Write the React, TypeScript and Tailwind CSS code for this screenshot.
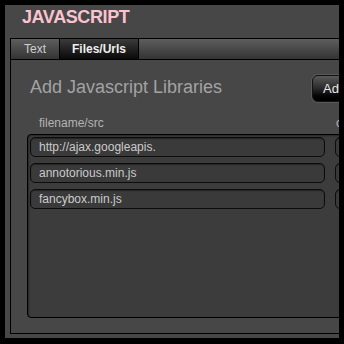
import React from 'react';

const files = ['http://ajax.googleapis.', 'annotorious.min.js', 'fancybox.min.js'];

const App: React.FC = () => {
  return (
    <div className="w-[344px] h-[344px] bg-black p-[5px] font-['Liberation_Sans',Arial,sans-serif]">
      <div className="w-[334px] h-[333px] bg-[#474747] overflow-hidden">
        {/* Title */}
        <div className="h-[33px] pl-[17px] pt-[1px]">
          <h1 className="text-[18px] leading-[22px] font-bold tracking-[-0.4px] text-[#f9c3cf]">
            JAVASCRIPT
          </h1>
        </div>

        {/* Tabbed box */}
        <div className="ml-[5px] w-[420px] h-[296px] border border-black">
          {/* Tab bar */}
          <div className="flex h-[21px] border-b border-black bg-gradient-to-b from-[#5e5e5e] to-[#343434]">
            <div className="w-[49px] border-r border-black flex items-center justify-center text-[12px] leading-[20px] text-[#cfcfcf]">
              Text
            </div>
            <div className="w-[79px] border-r border-black flex items-center justify-center text-[12px] leading-[20px] font-bold text-[#eeeeee] bg-gradient-to-b from-[#3c3c3c] to-[#0a0a0a]">
              Files/Urls
            </div>
          </div>

          {/* Content */}
          <div className="pl-[16px]">
            <div className="flex items-start mt-[15px] h-[27px]">
              <h2 className="w-[285px] pl-[3px] pt-[1px] text-[18px] leading-[22px] text-[#a3a3a3]">
                Add Javascript Libraries
              </h2>
              <button className="w-[80px] h-[27px] rounded-[6px] border border-[#111] bg-gradient-to-b from-[#5a5a5a] via-[#2a2a2a] to-[#000] text-left pl-[10px] text-[13px] text-[#e4e8f0] shadow-[0_0_0_1px_rgba(110,110,110,0.5)]">
                Add
              </button>
            </div>

            {/* Column headers */}
            <div className="flex mt-[14px] mb-[4px] text-[12px] leading-[14px] text-[#b4b4b4]">
              <span className="w-[309px] pl-[12px]">filename/src</span>
              <span>content</span>
            </div>

            {/* Rows */}
            <div className="h-[184px] rounded-[4px] border border-black bg-[#3c3c3c] pt-[2px] pl-[2px] flex flex-col gap-[6px] shadow-[inset_1px_1px_2px_rgba(0,0,0,0.35)]">
              {files.map((f) => (
                <div key={f} className="flex gap-[10px]">
                  <div className="w-[295px] h-[20px] rounded-[5px] border border-[#0c0c0c] bg-[#3a3a3a] px-[8px] text-[12px] leading-[18px] text-[#cbcbcb] shadow-[inset_0_1px_1px_rgba(0,0,0,0.4)]">
                    {f}
                  </div>
                  <div className="w-[60px] h-[20px] rounded-[5px] border border-[#0c0c0c] bg-[#3a3a3a] shadow-[inset_0_1px_1px_rgba(0,0,0,0.4)]" />
                </div>
              ))}
            </div>
          </div>
        </div>
      </div>
    </div>
  );
};

export default App;
